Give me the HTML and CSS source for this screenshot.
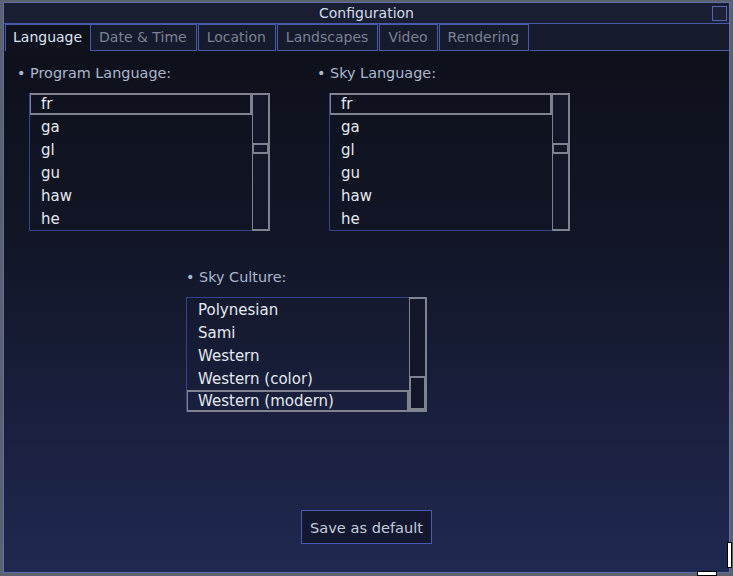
FILE: index.html
```html
<!DOCTYPE html>
<html>
<head>
<meta charset="utf-8">
<link rel="stylesheet" href="styles.css">
</head>
<body>
<div class="window">
  <div class="titlebar">
    <span></span>
    <span class="title">Configuration</span>
    <span class="box"></span>
  </div>
  <div class="tabs">
    <div class="tab active">Language</div>
    <div class="tab">Date &amp; Time</div>
    <div class="tab">Location</div>
    <div class="tab">Landscapes</div>
    <div class="tab">Video</div>
    <div class="tab">Rendering</div>
    <div class="tabfill"></div>
  </div>
  <div class="content">
    <div class="toprow">
      <div class="section">
        <div class="label">• Program Language:</div>
        <div class="listbox">
          <div class="items topsel">
            <div class="row sel">fr</div>
            <div class="row">ga</div>
            <div class="row">gl</div>
            <div class="row">gu</div>
            <div class="row">haw</div>
            <div class="row">he</div>
          </div>
          <div class="scroll"><div class="thumb" style="margin-top:48px;height:11px"></div></div>
        </div>
      </div>
      <div class="section">
        <div class="label">• Sky Language:</div>
        <div class="listbox">
          <div class="items topsel">
            <div class="row sel">fr</div>
            <div class="row">ga</div>
            <div class="row">gl</div>
            <div class="row">gu</div>
            <div class="row">haw</div>
            <div class="row">he</div>
          </div>
          <div class="scroll"><div class="thumb" style="margin-top:48px;height:11px"></div></div>
        </div>
      </div>
    </div>
    <div class="section culture">
      <div class="label">• Sky Culture:</div>
      <div class="listbox short">
        <div class="items botsel">
          <div class="row">Polynesian</div>
          <div class="row">Sami</div>
          <div class="row">Western</div>
          <div class="row">Western (color)</div>
          <div class="row sel">Western (modern)</div>
        </div>
        <div class="scroll"><div class="thumb" style="margin-top:77px;height:34px"></div></div>
      </div>
    </div>
    <div class="btnrow">
      <div class="button">Save as default</div>
    </div>
  </div>
  <span class="grip grip-v"></span>
  <span class="grip grip-h"></span>
</div>
</body>
</html>
```

FILE: styles.css
```css
* { box-sizing: border-box; }
html, body { margin: 0; padding: 0; }
body {
  background: #5c616d;
  width: 733px;
  height: 576px;
  overflow: hidden;
  font-family: "DejaVu Sans", "Liberation Sans", sans-serif;
  font-size: 14px;
}
.window {
  position: relative;
  margin: 2px 3px 0 3px;
  width: 727px;
  height: 571px;
  border: 1px solid #5f6fae;
  display: flex;
  flex-direction: column;
  background: #141829;
}
.titlebar {
  height: 21px;
  display: grid;
  grid-template-columns: 1fr auto 1fr;
  align-items: center;
  background: #1a1e33;
  border-bottom: 1px solid #4a5aa8;
  color: #d4dcec;
}
.title { line-height: 20px; }
.box {
  justify-self: end;
  width: 15px;
  height: 15px;
  border: 1px solid #5565b0;
  margin-right: 2px;
  background: #1c2138;
}
.tabs {
  height: 27px;
  display: flex;
  background: #151a2c;
  padding-left: 1px;
}
.tab {
  height: 27px;
  line-height: 25px;
  padding: 0 9px 0 8px;
  border: 1px solid #4a5aa8;
  color: #7c8294;
  margin-right: 1px;
  background: #151a2c;
}
.tab.active {
  color: #dce4f4;
  background: #0f121d;
  border: none;
  border-left: 1px solid #4a5aa8;
  border-top: 1px solid #4a5aa8;
  padding: 0 8px 0 7px;
  margin-right: 0;
}
.tabfill {
  flex: 1;
  border-bottom: 1px solid #4a5aa8;
}
.content {
  flex: 1;
  background: linear-gradient(180deg, #0e111b 0%, #111526 35%, #181e3a 65%, #1f2850 100%);
  padding: 13px 0 0 14px;
  color: #e0e4ec;
}
.toprow {
  display: grid;
  grid-template-columns: 300px 300px;
}
.label {
  height: 18px;
  line-height: 18px;
  font-size: 14.4px;
  color: #aab6ce;
  margin-bottom: 11px;
  margin-left: -1px;
}
.listbox {
  margin-left: 11px;
  width: 241px;
  height: 138px;
  display: flex;
}
.listbox.short { height: 115px; }
.items {
  flex: 1;
  border-left: 1px solid #34458e;
  border-bottom: 1px solid #34458e;
  display: flex;
  flex-direction: column;
  font-size: 15px;
}
.items.botsel { border-top: 1px solid #34458e; border-bottom: none; }
.row {
  height: 23px;
  line-height: 24px;
  padding-left: 11px;
  color: #e4e8f0;
  flex: none;
}
.items.topsel .row:first-child { height: 22px; }
.row.sel {
  border: 2px solid #7f838f;
  border-left-width: 1px;
  padding-left: 10px;
  line-height: 19px;
}
.items.botsel .row.sel { height: 22px; }
.scroll {
  width: 18px;
  border: 2px solid #7f838f;
  border-left-width: 1px;
  background: #121628;
}
.thumb {
  border: 2px solid #7f838f;
  border-left-width: 1px;
  border-right-width: 1px;
}
.culture {
  margin-left: 167px;
  margin-top: 37px;
}
.culture .label { margin-left: 1px; }
.culture .listbox { margin-left: 1px; }
.btnrow {
  margin-left: 283px;
  margin-top: 98px;
}
.button {
  width: 131px;
  height: 34px;
  line-height: 33px;
  text-align: center;
  font-size: 14.6px;
  border: 1px solid #4a5ab2;
  background: #131830;
  color: #c4ccdc;
}
.grip {
  position: absolute;
  background: #ffffff;
  border: 1px solid #000;
}
.grip-v {
  right: -3px;
  bottom: 4px;
  width: 5px;
  height: 26px;
}
.grip-h {
  right: 12px;
  bottom: -4px;
  width: 20px;
  height: 5px;
}
```
